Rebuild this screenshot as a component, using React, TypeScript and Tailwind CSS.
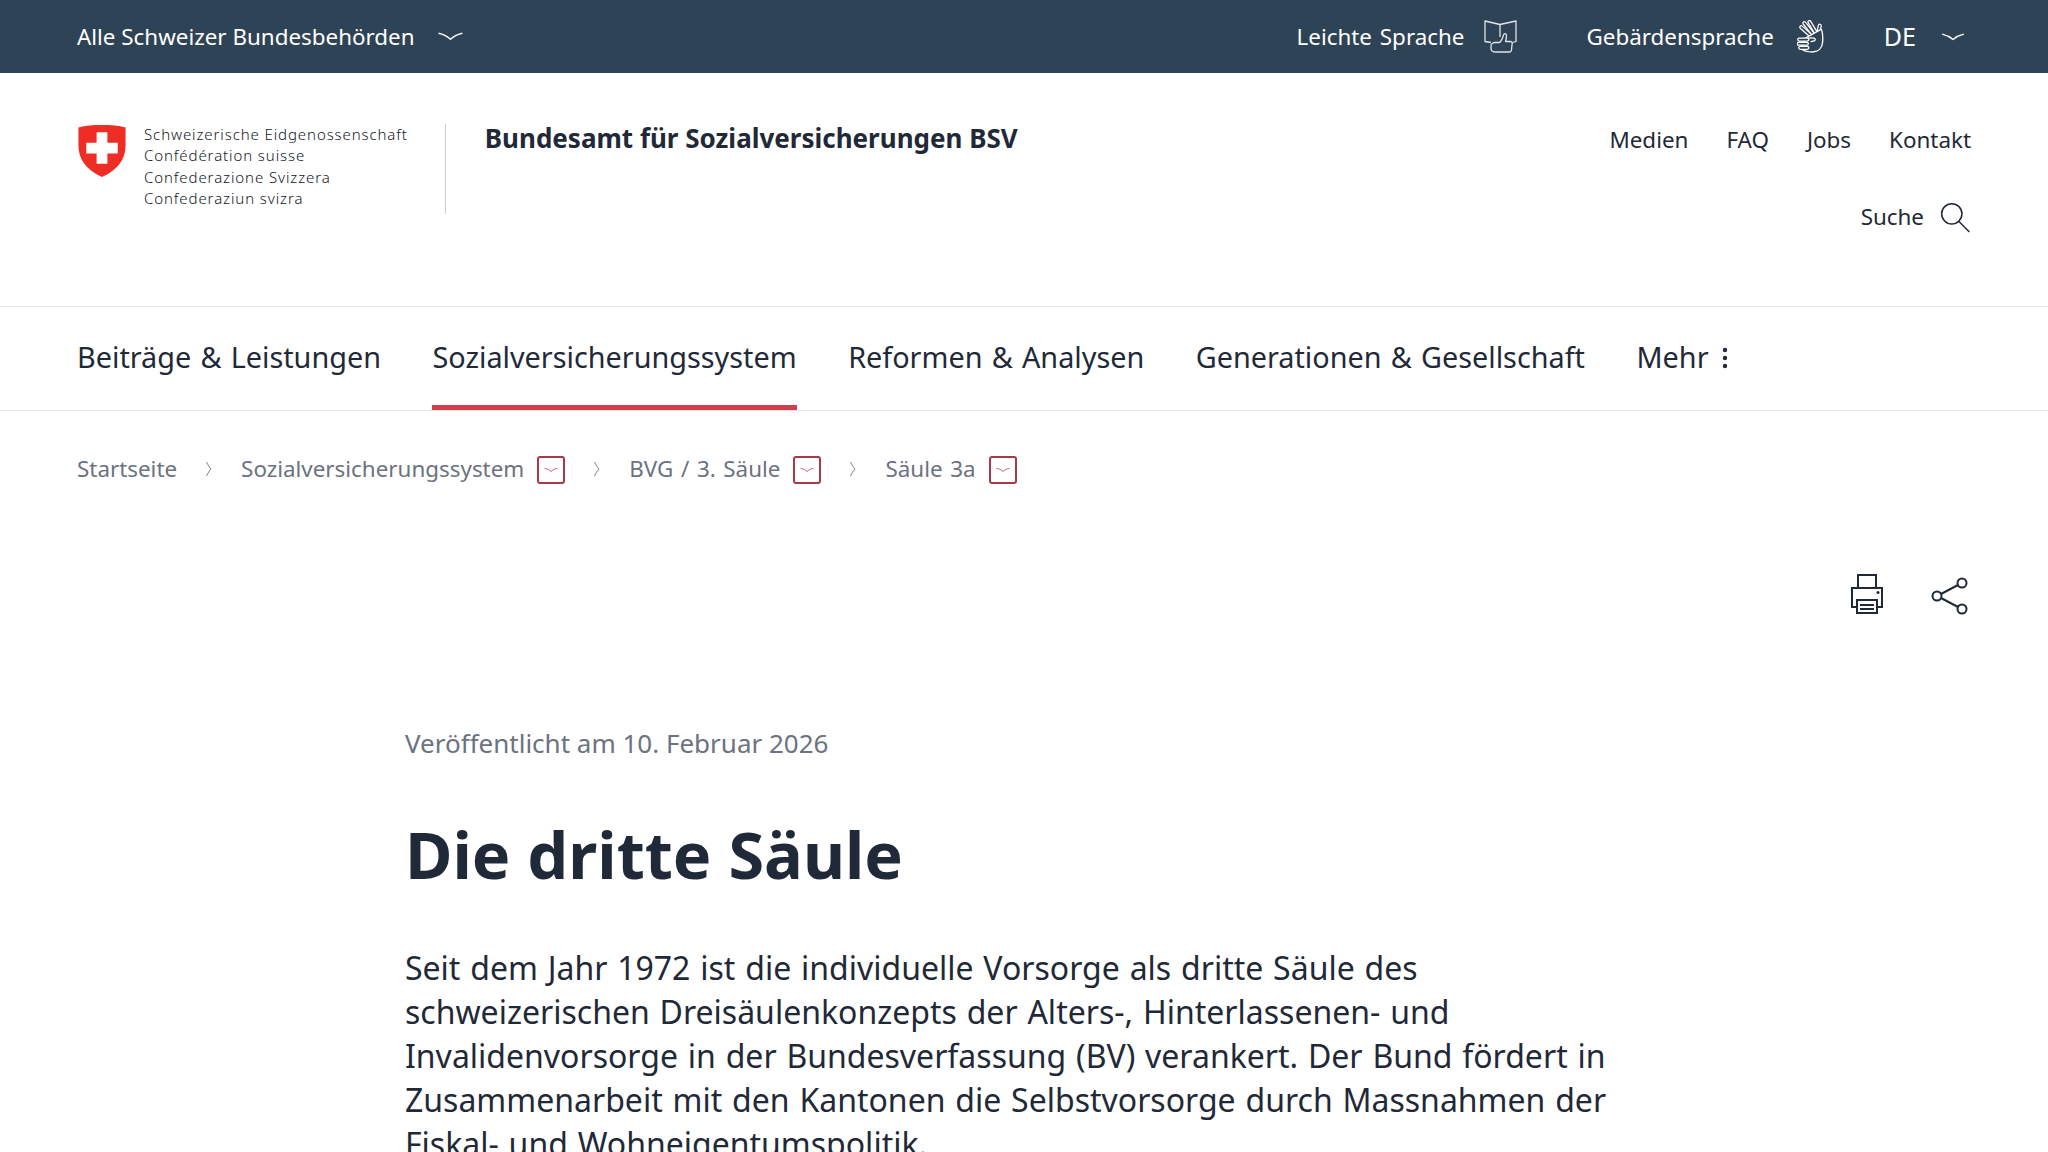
import { Fragment } from "react";

const SERVICE_NAV = ["Medien", "FAQ", "Jobs", "Kontakt"];
const MAIN_NAV = ["Beiträge & Leistungen", "Sozialversicherungssystem", "Reformen & Analysen", "Generationen & Gesellschaft"];
const CRUMBS = ["Sozialversicherungssystem", "BVG / 3. Säule", "Säule 3a"];

function Chevron({ className }: { className: string }) {
  return (
    <svg viewBox="0 0 28 12" className={className} fill="none" stroke="currentColor" strokeWidth="1.5">
      <path d="M1 2.500c5 1 9 3 13 6.500 4-3.500 8-5.500 13-6.500" />
    </svg>
  );
}

function BookThumb() {
  return (
    <svg viewBox="0 0 33 33" className="h-[33px] w-[33px]" fill="none" stroke="#dfe5ea" strokeWidth="1.300" strokeLinejoin="round">
      <path d="M7 22.500 1 21.500V1l15 3.500L32 1v20.500l-3.500 1" />
      <path d="M16 4.500V17" />
      <path d="M7 26c0-2 2-3.500 4-3.500h4.500c1.500-1 3-4 4-7.500.5-2 3-2 3 .5 0 2-.5 4.500-1 6h5c2 0 2 2 1.500 3l-.5 5.500c-.2 1.500-1 2-2 2H12c-3 0-5-.5-5-3.500Z" />
    </svg>
  );
}

function Hands() {
  const back = ["M4 7l9 8", "M7 3l8 10", "M12 2l6 10", "M22 5.500 20.500 13"];
  const front = ["M2 19h8", "M1.500 23h8", "M3 27h7"];
  return (
    <svg viewBox="0 0 26 32" className="h-[33px] w-[27px]" fill="none" strokeLinecap="round" strokeLinejoin="round">
      {back.map((d) => (
        <Fragment key={d}>
          <path d={d} stroke="#fff" strokeWidth="4" />
          <path d={d} stroke="#2f4356" strokeWidth="1.600" />
        </Fragment>
      ))}
      <path d="M23.500 9c1.300 3 1.500 8 1.300 12-.3 6-4 10-9.800 10-5 0-9-1-11-3.500L8 17.500 18 12Z" fill="#2f4356" stroke="#fff" strokeWidth="1.300" />
      <path d="M9 18.500c2.500-1.500 5-1.500 7.500-1 1.500.4 1.500 2.300 0 2.700l-3 .8" stroke="#fff" strokeWidth="1.200" />
      {front.map((d) => (
        <Fragment key={d}>
          <path d={d} stroke="#fff" strokeWidth="4" />
          <path d={d} stroke="#2f4356" strokeWidth="1.600" />
        </Fragment>
      ))}
    </svg>
  );
}

function SwissShield() {
  return (
    <svg viewBox="0 0 50 55" className="h-[54px] w-[50px]">
      <path d="M25 1c9 0 17 .5 24 2.500V22c0 14-8 25-24 32C9 47 1 36 1 22V3.500C8 1.500 16 1 25 1Z" fill="#ee2d24" />
      <path d="M19.500 8.500h11V19H41v11H30.500v10.500h-11V30H9V19h10.500Z" fill="#fff" />
    </svg>
  );
}

function SearchIcon() {
  return (
    <svg viewBox="0 0 30 30" className="h-[32px] w-[32px]" fill="none" stroke="#1f2937" strokeWidth="1.400">
      <circle cx="12" cy="12" r="9.500" />
      <path d="m18.500 19 10 10" />
    </svg>
  );
}

function PrintIcon() {
  return (
    <svg viewBox="0 0 34 42" className="h-[42px] w-[34px]" fill="none" stroke="#1f2937" strokeWidth="2">
      <path d="M8 15V2h18v13" />
      <path d="M8 34H2V15h30v19h-6" />
      <path d="M7 27h20v13H7Z" />
      <path d="M10 32h14M10 36h14" />
      <circle cx="28" cy="19.500" r="1.500" fill="#1f2937" stroke="none" />
    </svg>
  );
}

function ShareIcon() {
  return (
    <svg viewBox="0 0 38 38" className="h-[38px] w-[38px]" fill="none" stroke="#1f2937" strokeWidth="2">
      <circle cx="6" cy="19" r="4.500" />
      <circle cx="31" cy="6" r="4.500" />
      <circle cx="31" cy="32" r="4.500" />
      <path d="m10 17 17-9M10 21l17 9" />
    </svg>
  );
}

function CrumbToggle() {
  return (
    <span className="ml-[13px] mt-[2px] flex h-[28px] w-[28px] items-center justify-center rounded-[3px] border-2 border-[#a83a48] text-[#a83a48]">
      <Chevron className="h-[6px] w-[14px]" />
    </span>
  );
}

function CrumbSep() {
  return (
    <svg viewBox="0 0 8 16" className="mx-[28px] h-[16px] w-[8px] text-[#6b7280]" fill="none" stroke="currentColor" strokeWidth="0.900">
      <path d="M1.500 1c1.500 3 3 5.500 4.500 7-1.500 1.500-3 4-4.500 7" />
    </svg>
  );
}

export default function App() {
  return (
    <div className="h-[1152px] overflow-hidden bg-white font-['Noto_Sans',sans-serif] text-[#1f2937]">
      <div className="flex h-[73px] items-center justify-between bg-[#2f4356] pl-[77px] pr-[83px] text-[22.400px] text-white">
        <div className="flex items-center">
          <span>Alle Schweizer Bundesbehörden</span>
          <Chevron className="ml-[22px] h-[11px] w-[27px]" />
        </div>
        <div className="flex items-center">
          <span className="[word-spacing:2px]">Leichte Sprache</span>
          <span className="ml-[20px]"><BookThumb /></span>
          <span className="ml-[69px]">Gebärdensprache</span>
          <span className="ml-[23px]"><Hands /></span>
          <span className="ml-[60px] text-[25px]">DE</span>
          <Chevron className="ml-[25px] h-[10px] w-[24px]" />
        </div>
      </div>

      <header className="flex h-[233px] justify-between pl-[77px] pr-[77px] pt-[51px]">
        <div className="flex items-start">
          <SwissShield />
          <div className="ml-[17px] text-[15px] font-light leading-[21.400px] tracking-[0.900px] text-[#111827]">
            <div>Schweizerische Eidgenossenschaft</div>
            <div>Confédération suisse</div>
            <div>Confederazione Svizzera</div>
            <div>Confederaziun svizra</div>
          </div>
          <div className="ml-[37px] h-[90px] w-px bg-[#c9ccd1]" />
          <div className="ml-[39px] text-[26px] font-bold leading-[28px]">Bundesamt für Sozialversicherungen BSV</div>
        </div>
        <div className="flex flex-col items-end">
          <nav className="flex gap-[38px] text-[22.400px] leading-[32px]">
            {SERVICE_NAV.map((item) => <span key={item}>{item}</span>)}
          </nav>
          <div className="mt-[45px] flex items-center gap-[15px] text-[22.400px] leading-[32px]">
            <span>Suche</span>
            <SearchIcon />
          </div>
        </div>
      </header>

      <nav className="flex h-[105px] items-stretch gap-[51.500px] border-y border-[#e2e4e7] pl-[77px] pr-[76px] text-[28.800px] [word-spacing:1.700px]">
        {MAIN_NAV.map((item, i) => (
          <span key={item} className={i === 1 ? "flex items-center border-b-[5px] border-[#d0404a] pt-[2px]" : "flex items-center pb-[5px] pt-[2px]"}>
            {item}
          </span>
        ))}
        <span className="flex items-center pb-[5px] pt-[2px]">
          Mehr
          <svg viewBox="0 0 6 22" className="ml-[13px] mt-[2px] h-[22px] w-[6px]" fill="#1f2937">
            <circle cx="3" cy="3" r="2.200" />
            <circle cx="3" cy="11" r="2.200" />
            <circle cx="3" cy="19" r="2.200" />
          </svg>
        </span>
      </nav>

      <div className="flex items-center pl-[77px] pt-[43px] text-[22.400px] leading-[30px] text-[#6b7280] [word-spacing:1.800px]">
        <span>Startseite</span>
        <CrumbSep />
        {CRUMBS.map((c, i) => (
          <span key={c} className="flex items-center">
            <span>{c}</span>
            <CrumbToggle />
            {i < CRUMBS.length - 1 && <CrumbSep />}
          </span>
        ))}
      </div>

      <div className="flex items-end justify-end gap-[47px] pr-[79px] pt-[89px]">
        <PrintIcon />
        <ShareIcon />
      </div>

      <main className="ml-[405px] w-[1210px] pt-[108px]">
        <p className="text-[26px] leading-[40px] text-[#6b7280]">Veröffentlicht am 10. Februar 2026</p>
        <h1 className="mt-[51px] text-[64.800px] font-bold leading-[80px] text-[#1f2937]">Die dritte Säule</h1>
        <p className="mt-[52px] text-[32px] leading-[44px] text-[#1f2937] [word-spacing:1.500px]">
          Seit dem Jahr 1972 ist die individuelle Vorsorge als dritte Säule des schweizerischen Dreisäulenkonzepts der Alters-, Hinterlassenen- und Invalidenvorsorge in der Bundesverfassung (BV) verankert. Der Bund fördert in Zusammenarbeit mit den Kantonen die Selbstvorsorge durch Massnahmen der Fiskal- und Wohneigentumspolitik.
        </p>
      </main>
    </div>
  );
}
